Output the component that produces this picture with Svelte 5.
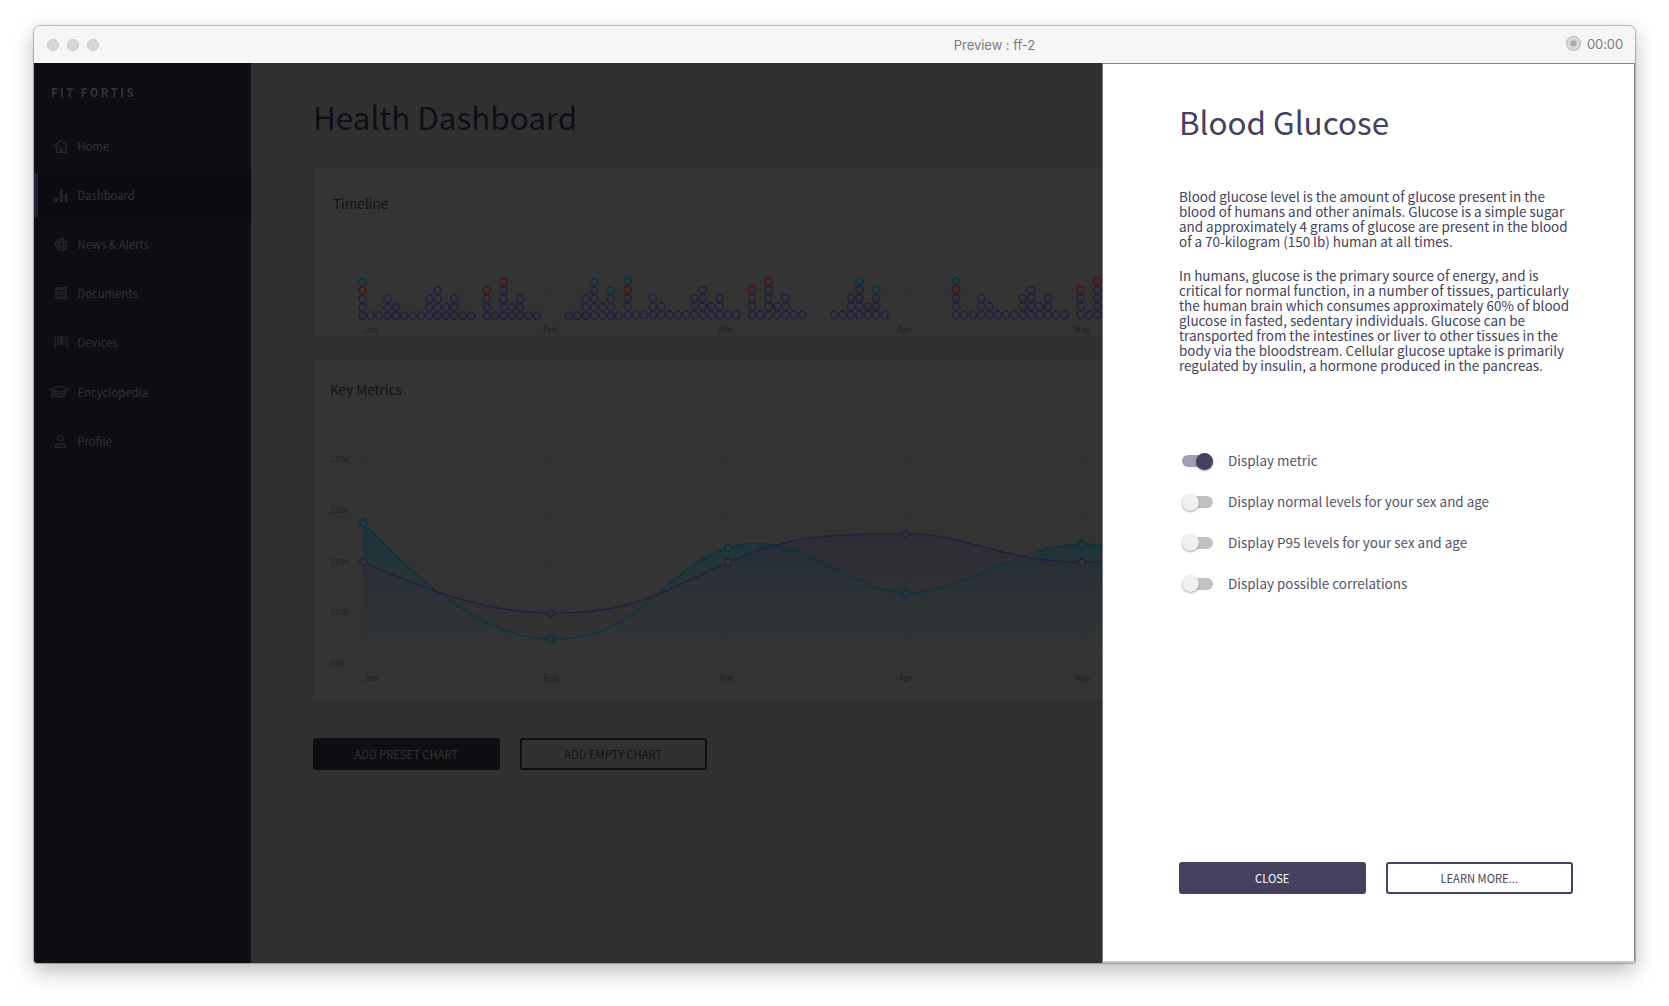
<script>
  const nav = [
    { id: 'home', label: 'Home' },
    { id: 'dashboard', label: 'Dashboard', active: true },
    { id: 'news', label: 'News & Alerts' },
    { id: 'documents', label: 'Documents' },
    { id: 'devices', label: 'Devices' },
    { id: 'encyclopedia', label: 'Encyclopedia' },
    { id: 'profile', label: 'Profile' },
  ];

  const paragraphs = [
    [
      'Blood glucose level is the amount of glucose present in the',
      'blood of humans and other animals. Glucose is a simple sugar',
      'and approximately 4 grams of glucose are present in the blood',
      'of a 70-kilogram (150 lb) human at all times.',
    ],
    [
      'In humans, glucose is the primary source of energy, and is',
      'critical for normal function, in a number of tissues, particularly',
      'the human brain which consumes approximately 60% of blood',
      'glucose in fasted, sedentary individuals. Glucose can be',
      'transported from the intestines or liver to other tissues in the',
      'body via the bloodstream. Cellular glucose uptake is primarily',
      'regulated by insulin, a hormone produced in the pancreas.',
    ],
  ];

  let switches = $state([
    { label: 'Display metric', on: true },
    { label: 'Display normal levels for your sex and age', on: false },
    { label: 'Display P95 levels for your sex and age', on: false },
    { label: 'Display possible correlations', on: false },
  ]);

  // Each column is a string read from the bottom up: p = purple, r = red, c = cyan.
  const A = ['ppprc', 'p', 'p', 'ppp', 'pp', 'p', 'p', 'p', 'ppp', 'pppp', 'pp', 'ppp', 'p', 'p'];
  const B = ['pppr', 'p', 'ppppr', 'pp', 'ppp', 'p', 'p'];
  const C = ['p', 'p', 'ppp', 'ppppc', 'pp', 'pppc', 'p'];
  const clusters = [
    { x: 362.5, y: 315.6, cols: A },
    { x: 486.7, y: 315.6, cols: B },
    { x: 569.1, y: 315.6, cols: C },
    { x: 627.7, y: 314.8, cols: A },
    { x: 752, y: 314.8, cols: B },
    { x: 834.4, y: 314.8, cols: C },
    { x: 956, y: 314.8, cols: A },
    { x: 1080.6, y: 314.8, cols: B },
  ];
  const dots = clusters.flatMap((g) =>
    g.cols.flatMap((col, i) => [...col].map((kind, j) => ({ kind, x: g.x + i * 8.36, y: g.y - j * 8.36 })))
  );

  const timelineMonths = [
    { t: 'Jan', line: 362.5, x: 362.8 },
    { t: 'Feb', line: 549.5, x: 542.8 },
    { t: 'Mar', line: 726.5, x: 718.5 },
    { t: 'Apr', line: 904.5, x: 897.6 },
    { t: 'May', line: 1080.5, x: 1073.6 },
  ];
  const metricMonths = [
    { t: 'Jan', line: 363.5, x: 363.6 },
    { t: 'Feb', line: 550.5, x: 543.5 },
    { t: 'Mar', line: 727.5, x: 719.5 },
    { t: 'Apr', line: 905.5, x: 898.6 },
    { t: 'May', line: 1081.5, x: 1074.6 },
  ];
  const levels = [
    { t: '$25k', line: 462.5, y: 462 },
    { t: '$20k', line: 513.5, y: 513 },
    { t: '$15k', line: 564.5, y: 565 },
    { t: '$10k', line: 615.5, y: 615 },
    { t: '$5k', line: 666.5, y: 666 },
  ];

  const cyan =
    'M363.3 523 C440 605 500 639 550.5 639 C640 641 660 570 728 548 C736 545 745 543.4 755 543.3 C812 543 860 593 905.8 593 C960 595 1020 544.5 1082 544 Q1095 544 1110 546';
  const purple =
    'M363.3 561.7 C430 592 490 613 551 613 C630 614 655 595 728 562.3 C790 534 840 533.5 905.8 533.5 C965 533.7 1005 562 1082 562.3 Q1095 562 1110 561';
  const cyanPoints = [[363.3, 523], [550.3, 639], [728, 548], [905.8, 593], [1082, 544]];
  const purplePoints = [[363.3, 561.7], [551, 613.2], [728, 562.3], [905.6, 534], [1081.7, 562.3]];
</script>

<div class="window">
  <header class="titlebar">
    <div class="lights"><i></i><i></i><i></i></div>
    <div class="title">Preview : ff-2</div>
    <div class="record"><span class="rec"></span><span>00:00</span></div>
  </header>

  <div class="body">
    <aside class="sidebar">
      <div class="brand">FIT FORTIS</div>
      <nav>
        {#each nav as item (item.id)}
          <div class="item {item.id}" class:active={item.active}>
            <svg class="icon" width="22" height="16" viewBox="0 0 22 16">
              {#if item.id === 'home'}
                <path d="M6.3 7.2V14.2H15.9V7.2M4.6 7.6L11.1 2.2L17.6 7.6M14.6 3V5" class="line" />
                <path d="M9.6 14V9.6H12.7V14Z" class="solid" />
              {:else if item.id === 'dashboard'}
                <path d="M4.6 11.2H8V15H4.6ZM9.7 2H13V15H9.7ZM14.6 6H17.8V15H14.6Z" class="solid" />
              {:else if item.id === 'news'}
                <circle cx="11.2" cy="8.4" r="5.8" class="line" />
                <circle cx="11.2" cy="8.4" r="2.6" class="line" />
                <path d="M9.2 3V6M13.2 3V6M9.2 10.8V13.8M13.2 10.8V13.8M5.8 6.5H8.8M5.8 10.3H8.8M13.6 6.5H16.6M13.6 10.3H16.6" class="line" />
              {:else if item.id === 'documents'}
                <path
                  d="M5.2 2H17.3V15L16.1 14L14.7 15L13.3 14L11.9 15L10.5 14L9.1 15L7.7 14L6.4 15L5.2 14ZM7.3 5V6.4H15.2V5ZM7.3 7.6V8.8H15.2V7.6ZM7.3 10V11.3H15.2V10Z"
                  fill-rule="evenodd"
                  class="solid"
                />
              {:else if item.id === 'devices'}
                <path d="M4.8 2H6.2V15H4.8ZM7.3 2H8.6V11H7.3ZM9.7 2H12.8V11H9.7ZM13.5 2H14.3V11H13.5ZM15 2H15.8V11H15ZM16.6 2H18V15H16.6Z" class="solid" />
              {:else if item.id === 'encyclopedia'}
                <path d="M0.8 5.2L9.8 2L18.8 5.2L9.8 8.4ZM4.6 7V10.8C6.6 14 13 14 15 10.8V7M2.3 6V12.6M5 9Q10 12.8 14.8 9" class="line" />
                <path d="M1.4 11.6H3.4L3.8 14.6H1.2Z" class="solid" />
              {:else}
                <circle cx="10.4" cy="5.1" r="2.9" class="line" />
                <path d="M5.5 14.2C5.5 9.5 15.4 9.5 15.4 14.2Z" class="line" />
              {/if}
            </svg>
            <span>{item.label}</span>
          </div>
        {/each}
      </nav>
    </aside>

    <main class="main">
      <h1>Health Dashboard</h1>

      <section class="card timeline">
        <h2>Timeline</h2>
        <svg width="789" height="76" viewBox="313 260 789 76">
          {#each timelineMonths as m}
            <path d="M{m.line} 262V318.5" class="grid" />
          {/each}
          <path d="M362 292.5H1102" class="grid faint" />
          {#each dots as d}
            <circle cx={d.x} cy={d.y} r="3.6" class="dot {d.kind}" />
          {/each}
          {#each timelineMonths as m}
            <text x={m.x} y="333" class="axis">{m.t}</text>
          {/each}
        </svg>
      </section>

      <section class="card metrics">
        <h2>Key Metrics</h2>
        <svg width="789" height="250" viewBox="313 440 789 250">
          <defs>
            <linearGradient id="cyanFill" gradientUnits="userSpaceOnUse" x1="0" y1="523" x2="0" y2="666">
              <stop offset="0" stop-color="#17343b" />
              <stop offset="1" stop-color="#303635" stop-opacity="0" />
            </linearGradient>
            <linearGradient id="purpleFill" gradientUnits="userSpaceOnUse" x1="0" y1="533" x2="0" y2="650">
              <stop offset="0" stop-color="#2c2835" stop-opacity="0.7" />
              <stop offset="1" stop-color="#2e3036" stop-opacity="0" />
            </linearGradient>
          </defs>
          {#each metricMonths as m}
            <path d="M{m.line} 447V666" class="grid" />
          {/each}
          {#each levels as l}
            <path d="M363 {l.line}H1102" class="grid" />
          {/each}
          <path d="{cyan} V666 H363.3 Z" fill="url(#cyanFill)" />
          <path d="{purple} V666 H363.3 Z" fill="url(#purpleFill)" />
          <path d={cyan} class="curve c" />
          <path d={purple} class="curve p" />
          {#each cyanPoints as [x, y]}
            <circle cx={x} cy={y} r="3.4" class="point c" />
          {/each}
          {#each purplePoints as [x, y]}
            <circle cx={x} cy={y} r="3.4" class="point p" />
          {/each}
          {#each levels as l}
            <text x="330.2" y={l.y} class="axis">{l.t}</text>
          {/each}
          {#each metricMonths as m}
            <text x={m.x} y="680.8" class="axis">{m.t}</text>
          {/each}
        </svg>
      </section>

      <div class="actions">
        <button class="btn solid-btn">ADD PRESET CHART</button>
        <button class="btn outline-btn">ADD EMPTY CHART</button>
      </div>
    </main>

    <aside class="panel">
      <h1>Blood Glucose</h1>
      <div class="copy">
        {#each paragraphs as lines}
          <p>
            {#each lines as line}<span>{line}</span>{/each}
          </p>
        {/each}
      </div>
      <div class="switches">
        {#each switches as s}
          <label class="switch">
            <input type="checkbox" bind:checked={s.on} />
            <span class="track" class:on={s.on}><span class="knob"></span></span>
            <span class="switch-label">{s.label}</span>
          </label>
        {/each}
      </div>
      <div class="actions">
        <button class="btn solid-btn">CLOSE</button>
        <button class="btn outline-btn">LEARN MORE...</button>
      </div>
    </aside>
  </div>
</div>

<style>
  :global(body) {
    background: #fff;
    overflow: hidden;
  }
  :global(#app) {
    box-sizing: border-box;
    height: 1006px;
    padding: 26px 34px 42px;
    font-family: 'Noto Sans CJK SC', 'Noto Sans', sans-serif;
  }
  h1, h2, p {
    margin: 0;
    font-weight: 400;
    white-space: nowrap;
  }
  .window {
    display: flex;
    flex-direction: column;
    box-sizing: border-box;
    width: 1601px;
    height: 937px;
    border-radius: 6px 6px 3px 3px;
    box-shadow: 0 0 1px 0.5px rgba(0, 0, 0, 0.25), 0 8px 22px rgba(0, 0, 0, 0.27);
  }
  .titlebar {
    display: grid;
    grid-template-columns: 1fr auto 1fr;
    align-items: center;
    height: 37px;
    border-radius: 6px 6px 0 0;
    background: #f6f6f6;
    color: #7b7b7b;
    font: 13px/16px Inter, sans-serif;
  }
  .lights {
    display: flex;
    gap: 8px;
    padding-left: 13px;
  }
  .lights i {
    box-sizing: border-box;
    width: 12px;
    height: 12px;
    border: 1px solid #c6c6c6;
    border-radius: 50%;
    background: #d8d8d8;
  }
  .title {
    padding: 0 0 0 320px;
    letter-spacing: -0.05px;
  }
  .record {
    display: flex;
    justify-content: flex-end;
    align-items: center;
    gap: 6px;
    padding: 0 12px 2px 0;
    letter-spacing: -0.1px;
  }
  .rec {
    box-sizing: border-box;
    width: 15px;
    height: 15px;
    border: 1px solid #b5b5b5;
    border-radius: 50%;
    background: radial-gradient(circle, #a9a9a9 0 2.8px, #d9d9d9 3.4px);
  }
  .body {
    display: flex;
    flex: 1;
    min-height: 0;
    overflow: hidden;
    border-radius: 0 0 3px 3px;
  }
  .sidebar {
    flex: none;
    width: 217px;
    background: #0e0d12;
  }
  .brand {
    height: 109px;
    padding: 19px 0 0 17px;
    box-sizing: border-box;
    color: #333335;
    font-size: 11.3px;
    font-weight: 700;
    line-height: 20px;
    letter-spacing: 2.45px;
  }
  nav {
    display: flex;
    flex-direction: column;
    gap: 5px;
    margin-top: -48px;
  }
  .item {
    display: flex;
    align-items: center;
    box-sizing: border-box;
    height: 44px;
    padding-left: 13px;
    border-left: 0 solid #201f35;
    color: #323234;
    font-size: 11.25px;
  }
  .item.active {
    padding-left: 9px;
    border-left-width: 4px;
    background: #0c0b0f;
  }
  .item.encyclopedia {
    margin-top: 1px;
  }
  .icon {
    flex: none;
    margin: 0 5.5px 1px 3px;
  }
  .icon .line {
    fill: none;
    stroke: #252529;
    stroke-width: 1.4;
  }
  .icon .solid {
    fill: #222226;
  }
  .main {
    flex: none;
    box-sizing: border-box;
    width: 851px;
    padding: 34px 0 0 62px;
    background: #303030;
    overflow: hidden;
  }
  .main h1, .panel h1 {
    font-size: 31.4px;
    line-height: 40px;
  }
  .main h1 {
    color: #0f0e17;
  }
  .card {
    box-sizing: border-box;
    width: 900px;
    background: #333;
    box-shadow: 0 1px 4px rgba(0, 0, 0, 0.08);
  }
  .card h2 {
    color: #121212;
    font-size: 13.5px;
    line-height: 20px;
  }
  .card svg {
    display: block;
  }
  .timeline {
    height: 169px;
    margin-top: 31px;
    padding-top: 25px;
  }
  .timeline h2 {
    padding-left: 20px;
    margin-bottom: 47px;
  }
  .metrics {
    height: 341px;
    margin-top: 23px;
    padding-top: 19px;
  }
  .metrics h2 {
    padding-left: 17px;
    margin-bottom: 41px;
  }
  .grid {
    fill: none;
    stroke: #303030;
    stroke-width: 1;
  }
  .faint {
    stroke: #313131;
  }
  .axis {
    fill: #222;
    font-size: 8.4px;
  }
  .dot {
    fill: none;
    stroke-width: 1.6;
  }
  .p {
    stroke: #24203c;
  }
  .r {
    stroke: #4a1414;
  }
  .c {
    stroke: #06343f;
  }
  .curve {
    fill: none;
    stroke-width: 1.5;
  }
  .curve.c {
    stroke: #10343d;
  }
  .point {
    fill: #333;
    stroke-width: 1.6;
  }
  .actions {
    display: flex;
    gap: 20.5px;
  }
  .btn {
    box-sizing: border-box;
    width: 186.5px;
    height: 32px;
    padding: 1px 0 0;
    border: 2px solid #43415e;
    border-radius: 3px;
    background: none;
    color: #43415e;
    font: 11.2px/27px 'Noto Sans CJK SC', sans-serif;
  }
  .solid-btn {
    background: #43415e;
    color: #fff;
  }
  .main .actions {
    margin-top: 36.5px;
  }
  .main .btn {
    border-color: #0e0d14;
    color: #101014;
  }
  .main .solid-btn {
    background: #0e0d12;
    color: #333;
  }
  .panel {
    flex: 1;
    display: flex;
    flex-direction: column;
    box-sizing: border-box;
    padding: 38px 0 67.5px 76px;
    border: 1px solid #858585;
    border-left-color: #777;
    border-bottom: 2px solid #c6c6c6;
    background: #fff;
    color: #43415e;
  }
  .copy {
    display: flex;
    flex-direction: column;
    gap: 19px;
    margin-top: 46.5px;
    font-size: 13.44px;
    line-height: 15px;
  }
  .copy span {
    display: block;
  }
  .switches {
    display: flex;
    flex-direction: column;
    margin-top: 68.5px;
  }
  .switch {
    display: flex;
    align-items: center;
    height: 40.8px;
    color: #54536a;
    font-size: 13.44px;
    line-height: 20px;
  }
  .switch input {
    display: none;
  }
  .switch-label {
    padding-bottom: 2px;
  }
  .track {
    display: flex;
    align-items: center;
    width: 31px;
    height: 12px;
    margin: 0 15.5px 0 2.5px;
    border-radius: 6px;
    background: #c2c2c2;
  }
  .track.on {
    justify-content: flex-end;
    background: #a09eb0;
  }
  .knob {
    width: 17px;
    height: 17px;
    border-radius: 50%;
    background: #f1f1f1;
    box-shadow: 0 1px 2px rgba(0, 0, 0, 0.35);
  }
  .on .knob {
    background: #43415e;
  }
  .panel .actions {
    margin-top: auto;
  }
</style>
